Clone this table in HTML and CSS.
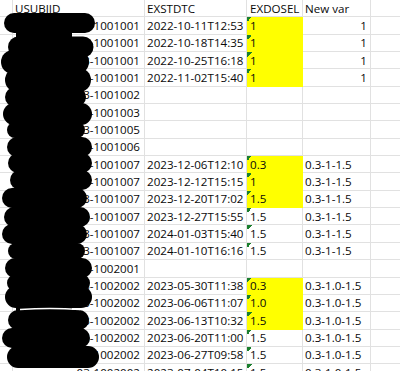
FILE: index.html
```html
<!DOCTYPE html>
<html>
<head>
<meta charset="utf-8">
<link rel="stylesheet" href="styles.css">
</head>
<body>
<div class="sheet">
  <div class="row">
    <div class="c c0"></div><div class="c ca hdr">USUBJID</div><div class="c cb">EXSTDTC</div><div class="c cc">EXDOSEL</div><div class="c cd">New var</div><div class="c ce"></div>
  </div>
  <div class="row"><div class="c c0"></div><div class="c ca">03-1001001</div><div class="c cb">2022-10-11T12:53</div><div class="c cc fill tri">1</div><div class="c cd num">1</div><div class="c ce"></div></div>
  <div class="row"><div class="c c0"></div><div class="c ca">03-1001001</div><div class="c cb">2022-10-18T14:35</div><div class="c cc fill tri">1</div><div class="c cd num">1</div><div class="c ce"></div></div>
  <div class="row"><div class="c c0"></div><div class="c ca">03-1001001</div><div class="c cb">2022-10-25T16:18</div><div class="c cc fill tri">1</div><div class="c cd num">1</div><div class="c ce"></div></div>
  <div class="row"><div class="c c0"></div><div class="c ca">03-1001001</div><div class="c cb">2022-11-02T15:40</div><div class="c cc fill tri">1</div><div class="c cd num">1</div><div class="c ce"></div></div>
  <div class="row"><div class="c c0"></div><div class="c ca">03-1001002</div><div class="c cb"></div><div class="c cc"></div><div class="c cd"></div><div class="c ce"></div></div>
  <div class="row"><div class="c c0"></div><div class="c ca">03-1001003</div><div class="c cb"></div><div class="c cc"></div><div class="c cd"></div><div class="c ce"></div></div>
  <div class="row"><div class="c c0"></div><div class="c ca">03-1001005</div><div class="c cb"></div><div class="c cc"></div><div class="c cd"></div><div class="c ce"></div></div>
  <div class="row"><div class="c c0"></div><div class="c ca">03-1001006</div><div class="c cb"></div><div class="c cc"></div><div class="c cd"></div><div class="c ce"></div></div>
  <div class="row"><div class="c c0"></div><div class="c ca">03-1001007</div><div class="c cb">2023-12-06T12:10</div><div class="c cc fill tri">0.3</div><div class="c cd">0.3-1-1.5</div><div class="c ce"></div></div>
  <div class="row"><div class="c c0"></div><div class="c ca">03-1001007</div><div class="c cb">2023-12-12T15:15</div><div class="c cc fill tri">1</div><div class="c cd">0.3-1-1.5</div><div class="c ce"></div></div>
  <div class="row"><div class="c c0"></div><div class="c ca">03-1001007</div><div class="c cb">2023-12-20T17:02</div><div class="c cc fill tri">1.5</div><div class="c cd">0.3-1-1.5</div><div class="c ce"></div></div>
  <div class="row"><div class="c c0"></div><div class="c ca">03-1001007</div><div class="c cb">2023-12-27T15:55</div><div class="c cc tri">1.5</div><div class="c cd">0.3-1-1.5</div><div class="c ce"></div></div>
  <div class="row"><div class="c c0"></div><div class="c ca">03-1001007</div><div class="c cb">2024-01-03T15:40</div><div class="c cc tri">1.5</div><div class="c cd">0.3-1-1.5</div><div class="c ce"></div></div>
  <div class="row"><div class="c c0"></div><div class="c ca">03-1001007</div><div class="c cb">2024-01-10T16:16</div><div class="c cc tri">1.5</div><div class="c cd">0.3-1-1.5</div><div class="c ce"></div></div>
  <div class="row"><div class="c c0"></div><div class="c ca">03-1002001</div><div class="c cb"></div><div class="c cc"></div><div class="c cd"></div><div class="c ce"></div></div>
  <div class="row"><div class="c c0"></div><div class="c ca">03-1002002</div><div class="c cb">2023-05-30T11:38</div><div class="c cc fill tri">0.3</div><div class="c cd">0.3-1.0-1.5</div><div class="c ce"></div></div>
  <div class="row"><div class="c c0"></div><div class="c ca">03-1002002</div><div class="c cb">2023-06-06T11:07</div><div class="c cc fill tri">1.0</div><div class="c cd">0.3-1.0-1.5</div><div class="c ce"></div></div>
  <div class="row"><div class="c c0"></div><div class="c ca">03-1002002</div><div class="c cb">2023-06-13T10:32</div><div class="c cc fill tri">1.5</div><div class="c cd">0.3-1.0-1.5</div><div class="c ce"></div></div>
  <div class="row"><div class="c c0"></div><div class="c ca">03-1002002</div><div class="c cb">2023-06-20T11:00</div><div class="c cc tri">1.5</div><div class="c cd">0.3-1.0-1.5</div><div class="c ce"></div></div>
  <div class="row"><div class="c c0"></div><div class="c ca">03-1002002</div><div class="c cb">2023-06-27T09:58</div><div class="c cc tri">1.5</div><div class="c cd">0.3-1.0-1.5</div><div class="c ce"></div></div>
  <div class="row"><div class="c c0"></div><div class="c ca">03-1002002</div><div class="c cb">2023-07-04T10:15</div><div class="c cc tri">1.5</div><div class="c cd">0.3-1.0-1.5</div><div class="c ce"></div></div>

  <svg class="redact" width="100" height="371" viewBox="0 0 100 371">
    <g stroke="#000" stroke-linecap="round" fill="none">
      <line x1="14" y1="23" x2="85" y2="23" stroke-width="20"/>
      <line x1="18.5" y1="47" x2="83" y2="47" stroke-width="21"/>
      <line x1="13" y1="62" x2="77" y2="62" stroke-width="24"/>
      <line x1="17" y1="80" x2="79" y2="80" stroke-width="24"/>
      <line x1="15" y1="97" x2="76" y2="97" stroke-width="20"/>
      <line x1="14" y1="114" x2="81" y2="114" stroke-width="22"/>
      <line x1="15" y1="130" x2="77" y2="130" stroke-width="16"/>
      <line x1="17" y1="147" x2="82" y2="147" stroke-width="20"/>
      <line x1="18" y1="163" x2="82" y2="163" stroke-width="20"/>
      <line x1="20" y1="180" x2="82" y2="180" stroke-width="20"/>
      <line x1="12" y1="198" x2="77" y2="198" stroke-width="20"/>
      <line x1="14" y1="217" x2="80" y2="217" stroke-width="20"/>
      <line x1="12" y1="234" x2="77" y2="234" stroke-width="20"/>
      <line x1="16" y1="251" x2="77" y2="251" stroke-width="16"/>
      <line x1="15" y1="268" x2="82" y2="268" stroke-width="20"/>
      <line x1="16" y1="283" x2="81" y2="283" stroke-width="18"/>
      <line x1="16" y1="297" x2="81" y2="297" stroke-width="22"/>
      <line x1="18" y1="320" x2="79" y2="320" stroke-width="20"/>
      <line x1="12" y1="338" x2="80" y2="338" stroke-width="20"/>
      <line x1="18" y1="357" x2="88" y2="357" stroke-width="22"/>
    </g>
    <rect x="16" y="18" width="56" height="346" fill="#000"/>
    <path d="M20 309.5 Q50 307.5 80 309.5" stroke="#fff" stroke-width="1.4" fill="none"/>
  </svg>
</div>
</body>
</html>
```
FILE: styles.css
```css
html, body {
  margin: 0;
  padding: 0;
  background: #ffffff;
}

.sheet {
  position: relative;
  width: 400px;
  height: 371px;
  overflow: hidden;
  font-family: "Open Sans", "Liberation Sans", sans-serif;
  font-size: 11.6px;
  color: #0a0a0a;
}

.row {
  display: grid;
  grid-template-columns: 13px 132px 102px 56px 68px 1fr;
  height: 17.35px;
}

.c {
  box-sizing: border-box;
  border-right: 1px solid #e1e1e1;
  border-bottom: 1px solid #e1e1e1;
  padding-top: 1.5px;
  line-height: 14.85px;
  white-space: nowrap;
  overflow: hidden;
}

.c0 {
  padding: 0;
}

.ca {
  text-align: right;
  padding-right: 4px;
}

.ca.hdr {
  text-align: left;
  padding-left: 2px;
  padding-right: 0;
}

.cb {
  padding-left: 2px;
}

.cc {
  padding-left: 3px;
}

.cd {
  padding-left: 2px;
}

.cd.num {
  text-align: right;
  padding-left: 0;
  padding-right: 3px;
}

.ce {
  border-right: none;
}

.fill {
  background-color: #ffff00;
  border-right-color: #ffff00;
  border-bottom-color: #ffff00;
}

.tri {
  background-image: linear-gradient(135deg, #1a7f2e 50%, transparent 50%);
  background-size: 5px 5px;
  background-repeat: no-repeat;
  background-position: 0 0;
}

.redact {
  position: absolute;
  left: 0;
  top: 0;
}
```
